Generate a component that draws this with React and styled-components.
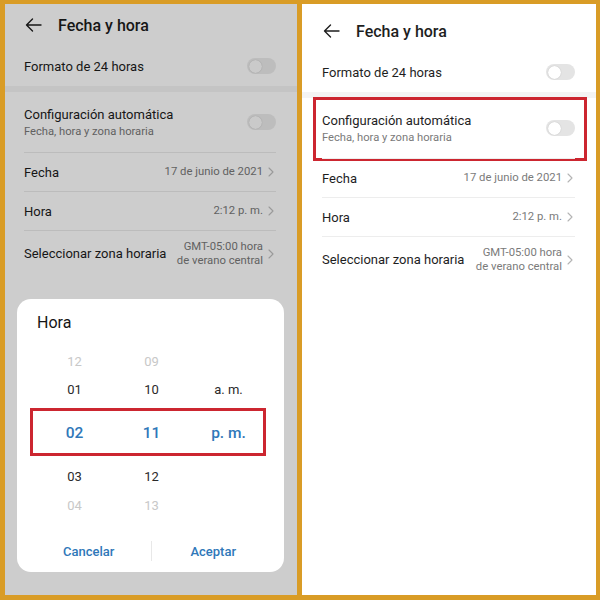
import React from "react";
import styled, { createGlobalStyle, ThemeProvider } from "styled-components";

const Global = createGlobalStyle`
  html, body { margin: 0; padding: 0; background: #d99c26; }
  * { box-sizing: border-box; }
`;

const dimTheme = {
  bg: "#cdcdcd",
  text: "#161616",
  sub: "#616161",
  divider: "#bcbcbc",
  band: "#c4c4c4",
  chevron: "#9a9a9a",
  track: "#bdbdbd",
  knob: "#cacaca",
};

const lightTheme = {
  bg: "#ffffff",
  text: "#1e1e1e",
  sub: "#7a7a7a",
  divider: "#ededed",
  band: "#f4f4f4",
  chevron: "#b4b4b4",
  track: "#e4e4e4",
  knob: "#ffffff",
};

const Frame = styled.div`
  width: 600px;
  height: 600px;
  padding: 4px 4px 5px 5px;
  background: #d99c26;
  display: grid;
  grid-template-columns: 292px 294px;
  column-gap: 5px;
  font-family: Roboto, "Noto Sans", "Liberation Sans", sans-serif;
`;

const Screen = styled.div`
  position: relative;
  overflow: hidden;
  background: ${(p) => p.theme.bg};
  padding-top: ${(p) => p.$top}px;
  display: flex;
  flex-direction: column;
`;

const Header = styled.div`
  height: 42px;
  display: flex;
  align-items: center;
  gap: 16px;
  padding-left: ${(p) => p.$left}px;
`;

const Title = styled.div`
  font-size: 16px;
  font-weight: 500;
  color: ${(p) => p.theme.text};
`;

const Row = styled.div`
  position: relative;
  display: flex;
  align-items: center;
  justify-content: space-between;
  height: ${(p) => p.$h}px;
  margin: 0 21px 0 ${(p) => p.$left}px;
  border-top: ${(p) => (p.$divided ? `1px solid ${p.theme.divider}` : "none")};

  ${(p) =>
    p.$highlight &&
    `
    &::after {
      content: "";
      position: absolute;
      left: -9px;
      right: -12px;
      top: -1px;
      bottom: -3px;
      border: 3px solid #cc2630;
      pointer-events: none;
    }
  `}
`;

const Band = styled.div`
  height: 6px;
  background: ${(p) => p.theme.band};
`;

const Labels = styled.div`
  display: flex;
  flex-direction: column;
  gap: 3px;
`;

const Label = styled.div`
  font-size: 13px;
  color: ${(p) => p.theme.text};
`;

const Sub = styled.div`
  font-size: 11.2px;
  color: ${(p) => p.theme.sub};
`;

const ValueWrap = styled.div`
  display: flex;
  align-items: center;
  gap: 5px;
  padding-right: 2px;
`;

const Value = styled.div`
  font-size: 11.3px;
  line-height: 14px;
  text-align: right;
  color: ${(p) => p.theme.sub};
`;

const Toggle = styled.div`
  width: 29px;
  height: 16px;
  border-radius: 8px;
  background: ${(p) => p.theme.track};
  position: relative;
  &::before {
    content: "";
    position: absolute;
    left: 1.5px;
    top: 1.5px;
    width: 13px;
    height: 13px;
    border-radius: 50%;
    background: ${(p) => p.theme.knob};
    box-shadow: 0 0 1px rgba(0, 0, 0, 0.25);
  }
`;

const Dialog = styled.div`
  position: absolute;
  left: 12px;
  right: 13px;
  bottom: 23px;
  background: #fff;
  border-radius: 14px;
  padding: 14px 0 3px;
`;

const DialogTitle = styled.div`
  height: 20px;
  line-height: 20px;
  padding-left: 20px;
  font-size: 16px;
  color: #151515;
`;

const Picker = styled.div`
  position: relative;
  margin-top: 14px;
  padding: 0 19px;
  display: grid;
  grid-template-columns: repeat(3, 77px);
`;

const PickerCol = styled.div`
  display: flex;
  flex-direction: column;
`;

const itemStyles = {
  faded: { h: 28, size: 13, color: "#c8c8c8", weight: 400 },
  normal: { h: 29, size: 13, color: "#2a2a2a", weight: 400 },
  selected: { h: 58, size: 15.5, color: "#2f78b9", weight: 500 },
};

const PickerItem = styled.div`
  height: ${(p) => itemStyles[p.$kind].h}px;
  display: flex;
  align-items: center;
  justify-content: center;
  font-size: ${(p) => itemStyles[p.$kind].size}px;
  font-weight: ${(p) => itemStyles[p.$kind].weight};
  color: ${(p) => itemStyles[p.$kind].color};
`;

const PickerMark = styled.div`
  position: absolute;
  left: 13px;
  width: 236px;
  top: 61px;
  height: 48px;
  border: 3px solid #cc2630;
  pointer-events: none;
`;

const Buttons = styled.div`
  margin-top: 14px;
  height: 36px;
  padding: 0 9px 0 10px;
  display: flex;
  align-items: center;
`;

const Button = styled.div`
  flex: 1;
  text-align: center;
  font-size: 13px;
  font-weight: 500;
  color: #2f78b9;
`;

const ButtonDivider = styled.div`
  width: 1px;
  height: 20px;
  background: #e8e8e8;
`;

const BackIcon = ({ color }) => (
  <svg width="17" height="14" viewBox="0 0 17 14" fill="none">
    <path
      d="M16 7H1.5M7.5 1L1.5 7L7.5 13"
      stroke={color}
      strokeWidth="1.4"
      strokeLinecap="round"
      strokeLinejoin="round"
    />
  </svg>
);

const Chevron = ({ color }) => (
  <svg width="6" height="10" viewBox="0 0 6 10" fill="none">
    <path d="M1 1L5 5L1 9" stroke={color} strokeWidth="1.1" strokeLinecap="round" strokeLinejoin="round" />
  </svg>
);

const SettingsList = ({ theme, left, highlight }) => (
  <>
    <Header $left={left}>
      <BackIcon color={theme.text} />
      <Title>Fecha y hora</Title>
    </Header>
    <Row $h={40} $left={left - 1}>
      <Label>Formato de 24 horas</Label>
      <Toggle />
    </Row>
    <Band />
    <Row $h={60} $left={left - 1} $highlight={highlight}>
      <Labels>
        <Label>Configuración automática</Label>
        <Sub>Fecha, hora y zona horaria</Sub>
      </Labels>
      <Toggle />
    </Row>
    <Row $h={39} $left={left - 1} $divided>
      <Label>Fecha</Label>
      <ValueWrap>
        <Value>17 de junio de 2021</Value>
        <Chevron color={theme.chevron} />
      </ValueWrap>
    </Row>
    <Row $h={39} $left={left - 1} $divided>
      <Label>Hora</Label>
      <ValueWrap>
        <Value>2:12 p. m.</Value>
        <Chevron color={theme.chevron} />
      </ValueWrap>
    </Row>
    <Row $h={46} $left={left - 1} $divided>
      <Label>Seleccionar zona horaria</Label>
      <ValueWrap>
        <Value>
          GMT-05:00 hora
          <br />
          de verano central
        </Value>
        <Chevron color={theme.chevron} />
      </ValueWrap>
    </Row>
  </>
);

const columns = [
  ["12", "01", "02", "03", "04"],
  ["09", "10", "11", "12", "13"],
  ["", "a. m.", "p. m.", "", ""],
];
const kinds = ["faded", "normal", "selected", "normal", "faded"];

const TimeDialog = () => (
  <Dialog>
    <DialogTitle>Hora</DialogTitle>
    <Picker>
      {columns.map((col, ci) => (
        <PickerCol key={ci}>
          {col.map((v, i) => (
            <PickerItem key={i} $kind={kinds[i]}>
              {v}
            </PickerItem>
          ))}
        </PickerCol>
      ))}
      <PickerMark />
    </Picker>
    <Buttons>
      <Button>Cancelar</Button>
      <ButtonDivider />
      <Button>Aceptar</Button>
    </Buttons>
  </Dialog>
);

export default function App() {
  return (
    <>
      <Global />
      <Frame>
        <ThemeProvider theme={dimTheme}>
          <Screen $top={0}>
            <SettingsList theme={dimTheme} left={20} />
            <TimeDialog />
          </Screen>
        </ThemeProvider>
        <ThemeProvider theme={lightTheme}>
          <Screen $top={6}>
            <SettingsList theme={lightTheme} left={21} highlight />
          </Screen>
        </ThemeProvider>
      </Frame>
    </>
  );
}
